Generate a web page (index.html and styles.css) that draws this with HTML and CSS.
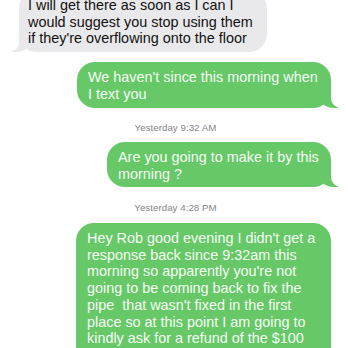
FILE: index.html
```html
<!DOCTYPE html>
<html>
<head>
<meta charset="utf-8">
<link rel="stylesheet" href="styles.css">
</head>
<body>
<div class="thread">
  <div class="bubble recv first">I will get there as soon as I can I would suggest you stop using them if they're overflowing onto the floor</div>
  <div class="bubble sent s1">We haven't since this morning when I text you</div>
  <div class="stamp st1">Yesterday 9:32 AM</div>
  <div class="bubble sent s2">Are you going to make it by this morning ?</div>
  <div class="stamp st2">Yesterday 4:28 PM</div>
  <div class="bubble sent s3">Hey Rob good evening I didn't get a response back since 9:32am this morning so apparently you're not going to be coming back to fix the pipe &nbsp;that wasn't fixed in the first place so at this point I am going to kindly ask for a refund of the $100</div>
</div>
</body>
</html>
```
FILE: styles.css
```css
html, body {
  margin: 0;
  padding: 0;
  background: #ffffff;
  overflow: hidden;
  height: 348px;
}
.thread {
  display: flex;
  flex-direction: column;
  font-family: "Liberation Sans", Arial, sans-serif;
  font-size: 14.4px;
  line-height: 16.7px;
}
.bubble {
  position: relative;
  z-index: 0;
  border-radius: 18px;
  box-sizing: border-box;
}
.recv {
  align-self: flex-start;
  background: #e9e9eb;
  color: #111111;
  margin-left: 19px;
  width: 248px;
  padding: 6px 12px 5px 9px;
}
.first {
  margin-top: -9px;
}
.sent {
  align-self: flex-end;
  background: #66c867;
  color: #f6fff6;
  margin-right: 17px;
  padding: 7px 12px 5px 11px;
}
.s1 { margin-top: 10px; width: 254px; }
.s2 { width: 224px; margin-top: 8px; }
.s3 { width: 255px; margin-top: 9px; padding-bottom: 30px; }
.sent::before,
.sent::after,
.recv::before,
.recv::after {
  content: "";
  position: absolute;
  bottom: 0;
  z-index: -1;
  height: 18px;
}
.sent::before {
  right: -7px;
  width: 20px;
  background: #66c867;
  border-bottom-left-radius: 16px 14px;
}
.sent::after {
  right: -26px;
  width: 26px;
  background: #ffffff;
  border-bottom-left-radius: 10px;
}
.recv::before {
  left: -7px;
  width: 20px;
  background: #e9e9eb;
  border-bottom-right-radius: 16px 14px;
}
.recv::after {
  left: -26px;
  width: 26px;
  background: #ffffff;
  border-bottom-right-radius: 10px;
}
.stamp {
  align-self: center;
  color: #86868a;
  font-size: 9.8px;
  line-height: 12px;
  padding-left: 3px;
}
.st1 { margin-top: 14.5px; }
.st2 { margin-top: 14.6px; }
```
